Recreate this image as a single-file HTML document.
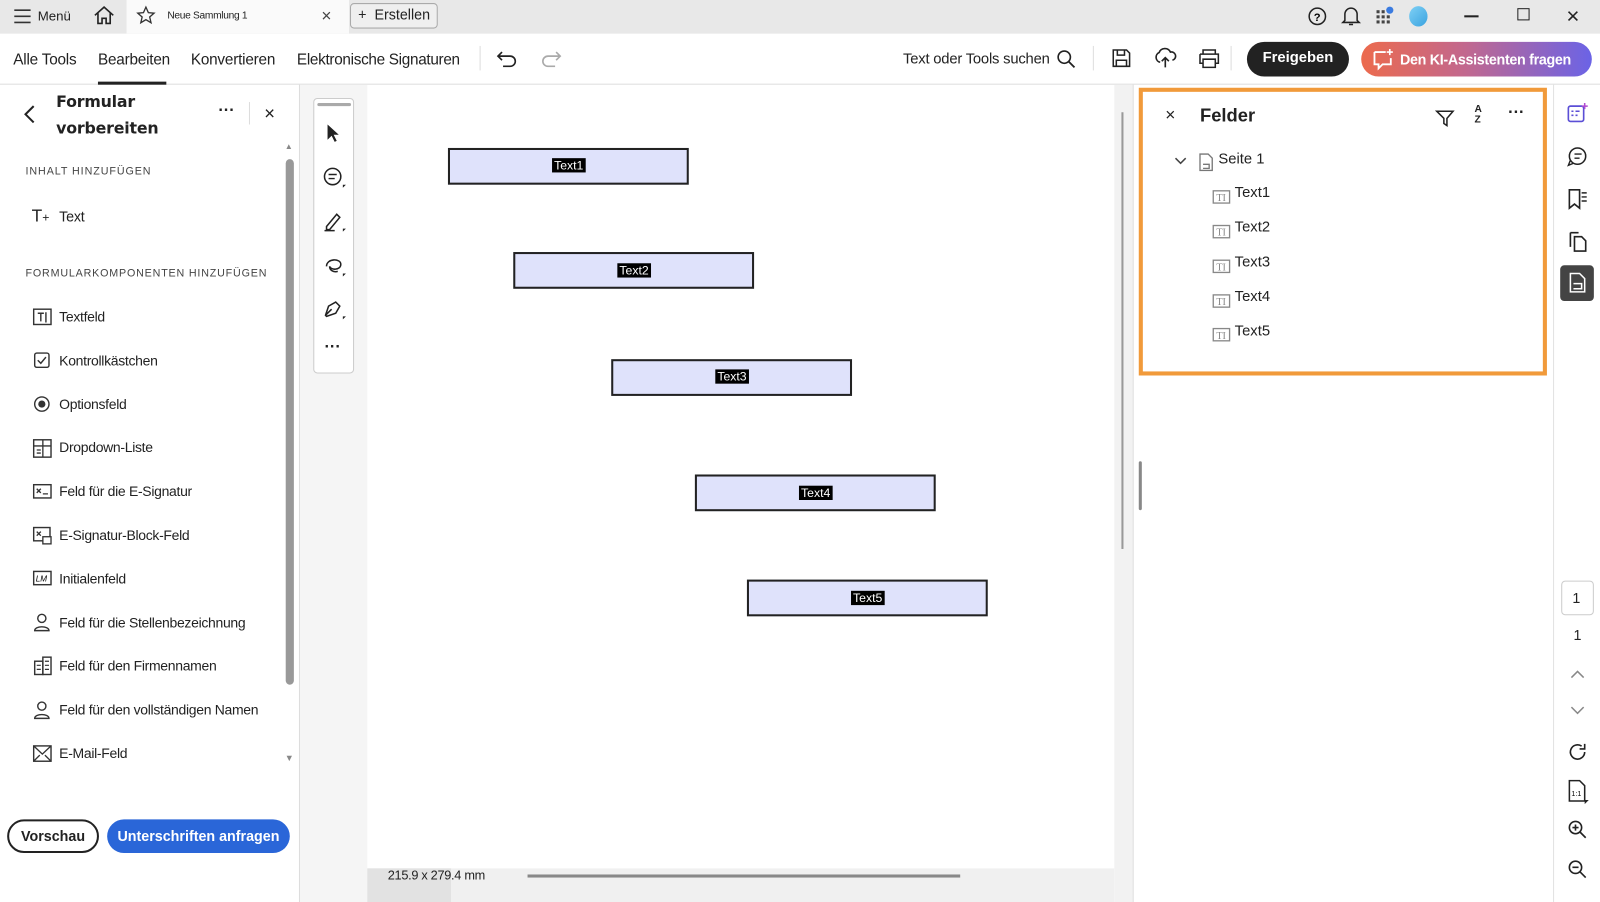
<!DOCTYPE html>
<html><head><meta charset="utf-8"><style>
*{box-sizing:border-box;margin:0;padding:0}
body{width:1600px;height:884px;overflow:hidden;font-family:"Liberation Sans",sans-serif;background:#fff;position:relative;color:#222}
#w{position:absolute;left:0;top:0;width:1568px;height:866px;transform:scale(1.0204);transform-origin:0 0}
.a{position:absolute}
.t{white-space:nowrap}
svg{position:absolute}
</style></head><body><div id="w">
<div class="a" style="left:0;top:0;width:1568px;height:33px;background:#e8e8e8"></div>
<div class="a" style="left:124px;top:0;width:218px;height:33px;background:#fafafa"></div>
<svg style="left:13px;top:8px" width="18" height="16"><path d="M1 2h16M1 8h16M1 14h16" stroke="#333" stroke-width="1.6"/></svg>
<div class="a t" style="left:37px;top:8px;font-size:13px">Menü</div>
<svg style="left:91px;top:5px" width="22" height="20"><path d="M2 10L11 2l9 8M5 8v10h4v-5h4v5h4V8" fill="none" stroke="#222" stroke-width="1.6"/></svg>
<svg style="left:133px;top:5px" width="20" height="20"><path d="M10 2l2.4 5.4 5.6.5-4.3 3.8 1.3 5.6L10 14.3 5 17.3l1.3-5.6L2 7.9l5.6-.5z" fill="none" stroke="#333" stroke-width="1.3"/></svg>
<div class="a t" style="left:164px;top:10px;font-size:10px;letter-spacing:-.3px">Neue Sammlung 1</div>
<div class="a t" style="left:315px;top:6px;font-size:17px;color:#444">×</div>
<div class="a" style="left:343px;top:3px;width:86px;height:25px;border:1px solid #aaa;border-radius:4px;background:#efefef"></div>
<div class="a t" style="left:351px;top:6px;font-size:14px">+&nbsp;&nbsp;Erstellen</div>
<svg style="left:1281px;top:6px" width="20" height="20"><circle cx="10" cy="10" r="8" fill="none" stroke="#222" stroke-width="1.5"/><text x="6.5" y="14.5" font-size="11" font-family="Liberation Sans" font-weight="bold">?</text></svg>
<svg style="left:1314px;top:5px" width="20" height="22"><path d="M4 15V9a6 6 0 0112 0v6l2 2H2zM8 19h4" fill="none" stroke="#222" stroke-width="1.5"/></svg>
<svg style="left:1348px;top:6px" width="20" height="20"><g fill="#444"><rect x="1" y="4" width="3" height="3"/><rect x="6" y="4" width="3" height="3"/><rect x="1" y="9" width="3" height="3"/><rect x="6" y="9" width="3" height="3"/><rect x="11" y="9" width="3" height="3"/><rect x="1" y="14" width="3" height="3"/><rect x="6" y="14" width="3" height="3"/><rect x="11" y="14" width="3" height="3"/></g><circle cx="14" cy="4" r="3.5" fill="#3a7be0"/></svg>
<div class="a" style="left:1381px;top:6px;width:18px;height:20px;border-radius:50%;background:linear-gradient(135deg,#7fd0f5,#3aa3e0)"></div>
<div class="a" style="left:1435px;top:15px;width:14px;height:1.5px;background:#222"></div>
<div class="a" style="left:1487px;top:8px;width:12px;height:12px;border:1.4px solid #222"></div>
<div class="a t" style="left:1535px;top:3px;font-size:22px;font-weight:300">×</div>
<div class="a" style="left:0;top:82px;width:1568px;height:1px;background:#ddd"></div>
<div class="a t" style="left:13px;top:50px;font-size:15px;letter-spacing:-.2px">Alle Tools</div>
<div class="a t" style="left:96px;top:50px;font-size:15px;letter-spacing:-.2px">Bearbeiten</div>
<div class="a" style="left:96px;top:80px;width:67px;height:3px;background:#222"></div>
<div class="a t" style="left:187px;top:50px;font-size:15px;letter-spacing:-.2px">Konvertieren</div>
<div class="a t" style="left:291px;top:50px;font-size:15px;letter-spacing:-.3px">Elektronische Signaturen</div>
<div class="a" style="left:470px;top:45px;width:1px;height:24px;background:#ddd"></div>
<svg style="left:485px;top:48px" width="24" height="18"><path d="M7 3L3 7l4 4M3 7h12a5 5 0 010 10H8" fill="none" stroke="#222" stroke-width="1.6"/></svg>
<svg style="left:528px;top:48px" width="24" height="18"><path d="M17 3l4 4-4 4M21 7H9a5 5 0 000 10h7" fill="none" stroke="#aaa" stroke-width="1.6"/></svg>
<div class="a t" style="left:885px;top:50px;font-size:14.5px;letter-spacing:-.2px">Text oder Tools suchen</div>
<svg style="left:1035px;top:48px" width="20" height="20"><circle cx="8" cy="8" r="6" fill="none" stroke="#222" stroke-width="1.6"/><path d="M12.5 12.5L18 18" stroke="#222" stroke-width="1.8"/></svg>
<div class="a" style="left:1071px;top:45px;width:1px;height:24px;background:#ddd"></div>
<svg style="left:1089px;top:47px" width="20" height="20"><path d="M2 2h13l3 3v13H2z M6 2v5h7V2 M5 18v-6h10v6" fill="none" stroke="#222" stroke-width="1.5"/></svg>
<svg style="left:1131px;top:46px" width="22" height="22"><path d="M6 15a5 5 0 01-1-9.5A6 6 0 0116 5a4 4 0 012 8M11 20v-9M7.5 14l3.5-3.5 3.5 3.5" fill="none" stroke="#222" stroke-width="1.6"/></svg>
<svg style="left:1174px;top:47px" width="22" height="20"><path d="M5 6V2h12v4M2 6h18v9h-3M5 15H2V6M5 11h12v8H5z" fill="none" stroke="#222" stroke-width="1.5"/></svg>
<div class="a" style="left:1206px;top:45px;width:1px;height:24px;background:#ddd"></div>
<div class="a" style="left:1222px;top:41px;width:100px;height:34px;border-radius:17px;background:#222"></div>
<div class="a t" style="left:1222px;top:49px;width:100px;text-align:center;font-size:14.5px;font-weight:bold;color:#fff">Freigeben</div>
<div class="a" style="left:1334px;top:41px;width:226px;height:34px;border-radius:17px;background:linear-gradient(90deg,#ec6a4d,#c2688e 45%,#6b63e6)"></div>
<svg style="left:1344px;top:47px" width="24" height="22"><path d="M3 4h11M3 4v12h4v4l4-4h8v-6" fill="none" stroke="#fff" stroke-width="1.8"/><path d="M18 1v6M15 4h6" stroke="#fff" stroke-width="1.6"/></svg>
<div class="a t" style="left:1372px;top:50px;font-size:14px;font-weight:bold;color:#fff;letter-spacing:-.3px">Den KI-Assistenten fragen</div>
<div class="a" style="left:293px;top:83px;width:1px;height:801px;background:#ddd"></div>
<svg style="left:22px;top:102px" width="14" height="20"><path d="M11 2L3 10l8 8" fill="none" stroke="#222" stroke-width="2"/></svg>
<div class="a" style="left:55px;top:87px;font-size:15.5px;line-height:26px;color:#222;font-family:'DejaVu Sans',sans-serif;font-weight:bold;letter-spacing:-.2px">Formular<br>vorbereiten</div>
<div class="a t" style="left:214px;top:100px;font-size:16px;font-weight:bold">···</div>
<div class="a" style="left:244px;top:100px;width:1px;height:22px;background:#ddd"></div>
<div class="a t" style="left:259px;top:101px;font-size:18px">×</div>
<div class="a t" style="left:25px;top:162px;font-size:10.5px;letter-spacing:.9px;color:#444">INHALT HINZUFÜGEN</div>
<div class="a t" style="left:31px;top:202px;font-size:17px">T<span style="font-size:12px">+</span></div>
<div class="a t" style="left:58px;top:204px;font-size:14px;letter-spacing:-.2px">Text</div>
<div class="a t" style="left:25px;top:262px;font-size:10.5px;letter-spacing:.8px;color:#444">FORMULARKOMPONENTEN HINZUFÜGEN</div>
<svg style="left:32px;top:302px" width="20" height="18"><rect x="1" y="1" width="17" height="15" fill="none" stroke="#333" stroke-width="1.4"/><path d="M5 5h6M8 5v8M13 4v10" stroke="#333" stroke-width="1.4"/></svg>
<svg style="left:33px;top:345px" width="18" height="18"><rect x="1" y="1" width="14" height="14" rx="2" fill="none" stroke="#333" stroke-width="1.4"/><path d="M4 8l3 3 5-6" fill="none" stroke="#333" stroke-width="1.4"/></svg>
<svg style="left:33px;top:388px" width="18" height="18"><circle cx="8" cy="8" r="7" fill="none" stroke="#333" stroke-width="1.4"/><circle cx="8" cy="8" r="3.5" fill="#333"/></svg>
<svg style="left:32px;top:430px" width="20" height="20"><rect x="1" y="1" width="17" height="17" fill="none" stroke="#333" stroke-width="1.4"/><path d="M1 7h17M10 1v17M4 11h4M4 14h4" stroke="#333" stroke-width="1.3"/></svg>
<svg style="left:32px;top:474px" width="20" height="16"><rect x="1" y="1" width="17" height="13" fill="none" stroke="#333" stroke-width="1.4"/><path d="M4 5l4 4M8 5l-4 4M10 10h5" stroke="#333" stroke-width="1.3"/></svg>
<svg style="left:32px;top:516px" width="20" height="20"><rect x="1" y="1" width="16" height="13" fill="none" stroke="#333" stroke-width="1.4"/><path d="M4 5l4 4M8 5l-4 4" stroke="#333" stroke-width="1.3"/><rect x="10" y="10" width="8" height="7" fill="#fff" stroke="#333" stroke-width="1.3"/></svg>
<svg style="left:32px;top:559px" width="20" height="16"><rect x="1" y="1" width="17" height="13" fill="none" stroke="#333" stroke-width="1.4"/><text x="3" y="11" font-size="8" font-family="Liberation Sans" font-style="italic">LM</text></svg>
<svg style="left:32px;top:600px" width="20" height="20"><circle cx="9" cy="6" r="4" fill="none" stroke="#333" stroke-width="1.4"/><path d="M2 18c0-5 14-5 14 0z" fill="none" stroke="#333" stroke-width="1.4"/></svg>
<svg style="left:32px;top:643px" width="20" height="20"><rect x="2" y="5" width="8" height="13" fill="none" stroke="#333" stroke-width="1.4"/><rect x="10" y="1" width="8" height="17" fill="none" stroke="#333" stroke-width="1.4"/><path d="M4 9h4M4 13h4M12 5h4M12 9h4M12 13h4" stroke="#333" stroke-width="1.2"/></svg>
<svg style="left:32px;top:686px" width="20" height="20"><circle cx="9" cy="6" r="4" fill="none" stroke="#333" stroke-width="1.4"/><path d="M2 18c0-5 14-5 14 0z" fill="none" stroke="#333" stroke-width="1.4"/></svg>
<svg style="left:32px;top:730px" width="20" height="18"><rect x="1" y="1" width="17" height="15" fill="none" stroke="#333" stroke-width="1.4"/><path d="M1 1l8.5 8 8.5-8M1 16l6-6M18 16l-6-6" fill="none" stroke="#333" stroke-width="1.3"/></svg>
<div class="a" style="left:58px;top:290px;font-size:13.7px;letter-spacing:-.3px;line-height:42.8px">Textfeld<br>Kontrollkästchen<br>Optionsfeld<br>Dropdown-Liste<br>Feld für die E-Signatur<br>E-Signatur-Block-Feld<br>Initialenfeld<br>Feld für die Stellenbezeichnung<br>Feld für den Firmennamen<br>Feld für den vollständigen Namen<br>E-Mail-Feld</div>
<div class="a" style="left:280px;top:156px;width:8px;height:515px;border-radius:4px;background:#999"></div>
<div class="a t" style="left:279px;top:139px;font-size:8px;color:#888">▲</div>
<div class="a t" style="left:279px;top:738px;font-size:9px;color:#888">▼</div>
<div class="a" style="left:7px;top:803px;width:90px;height:33px;border:2px solid #222;border-radius:17px"></div>
<div class="a t" style="left:7px;top:811px;width:90px;text-align:center;font-size:14px;font-weight:bold">Vorschau</div>
<div class="a" style="left:105px;top:803px;width:179px;height:33px;border-radius:17px;background:#2a66d8"></div>
<div class="a t" style="left:105px;top:811px;width:179px;text-align:center;font-size:14px;font-weight:bold;color:#fff">Unterschriften anfragen</div>
<div class="a" style="left:294px;top:83px;width:66px;height:801px;background:#f5f5f5"></div>
<div class="a" style="left:1092px;top:83px;width:18px;height:801px;background:#f2f2f2"></div>
<div class="a" style="left:1099px;top:110px;width:2px;height:428px;background:#999"></div>
<div class="a" style="left:360px;top:851px;width:732px;height:33px;background:#f0f0f0"></div>
<div class="a" style="left:360px;top:851px;width:82px;height:33px;background:#e2e2e2"></div>
<div class="a t" style="left:380px;top:851px;font-size:12.5px;letter-spacing:-.3px">215.9 x 279.4 mm</div>
<div class="a" style="left:517px;top:857px;width:424px;height:3px;background:#888"></div>
<div class="a" style="left:307px;top:96px;width:40px;height:270px;border:1px solid #ccc;border-radius:4px;background:#fff"></div>
<div class="a" style="left:311px;top:101px;width:33px;height:3px;border-radius:2px;background:#aaa"></div>
<svg style="left:318px;top:120px" width="16" height="20"><path d="M3 2v15l4-4 3 6 2-1-3-6h5z" fill="#222"/></svg>
<svg style="left:316px;top:163px" width="24" height="24"><circle cx="10" cy="10" r="8" fill="none" stroke="#222" stroke-width="1.5"/><path d="M6 8h8M6 12h6" stroke="#222" stroke-width="1.4"/><path d="M20 18l3 0-3 3z" fill="#222"/></svg>
<svg style="left:316px;top:205px" width="24" height="24"><path d="M4 17l10-12 3 3-10 12H4z" fill="none" stroke="#222" stroke-width="1.5"/><path d="M2 21h10" stroke="#222" stroke-width="1.5"/><path d="M20 19l3 0-3 3z" fill="#222"/></svg>
<svg style="left:316px;top:249px" width="24" height="24"><path d="M4 12c0-8 14-8 14-2s-10 6-11 2c0 4 4 6 8 5" fill="none" stroke="#222" stroke-width="1.5"/><path d="M20 19l3 0-3 3z" fill="#222"/></svg>
<svg style="left:316px;top:291px" width="24" height="24"><path d="M3 18l3-9 7-4 4 4-4 7-9 3zM3 18l6-6" fill="none" stroke="#222" stroke-width="1.5"/><path d="M20 19l3 0-3 3z" fill="#222"/></svg>
<div class="a t" style="left:318px;top:332px;font-size:16px;font-weight:bold">···</div>
<div class="a" style="left:439px;top:145px;width:236px;height:36px;border:2px solid #222;background:#dfe2fb"></div>
<div class="a t" style="left:541px;top:155px;font-size:12px;background:#000;color:#fff;padding:0 2px">Text1</div>
<div class="a" style="left:503px;top:247px;width:236px;height:36px;border:2px solid #222;background:#dfe2fb"></div>
<div class="a t" style="left:605px;top:258px;font-size:12px;background:#000;color:#fff;padding:0 2px">Text2</div>
<div class="a" style="left:599px;top:352px;width:236px;height:36px;border:2px solid #222;background:#dfe2fb"></div>
<div class="a t" style="left:701px;top:362px;font-size:12px;background:#000;color:#fff;padding:0 2px">Text3</div>
<div class="a" style="left:681px;top:465px;width:236px;height:36px;border:2px solid #222;background:#dfe2fb"></div>
<div class="a t" style="left:783px;top:476px;font-size:12px;background:#000;color:#fff;padding:0 2px">Text4</div>
<div class="a" style="left:732px;top:568px;width:236px;height:36px;border:2px solid #222;background:#dfe2fb"></div>
<div class="a t" style="left:834px;top:579px;font-size:12px;background:#000;color:#fff;padding:0 2px">Text5</div>
<div class="a" style="left:1110px;top:83px;width:1px;height:801px;background:#ddd"></div>
<div class="a" style="left:1116px;top:86px;width:400px;height:282px;border:4px solid #f19a3a"></div>
<div class="a" style="left:1116px;top:452px;width:3px;height:48px;border-radius:2px;background:#888"></div>
<div class="a t" style="left:1142px;top:103px;font-size:17px">×</div>
<div class="a t" style="left:1176px;top:103px;font-size:18px;font-weight:bold">Felder</div>
<svg style="left:1406px;top:106px" width="20" height="20"><path d="M2 3h16l-6 7v7l-3-2v-5z" fill="none" stroke="#222" stroke-width="1.5"/></svg>
<div class="a" style="left:1445px;top:103px;font-size:10px;line-height:10px;font-weight:bold">A<br>Z</div>
<div class="a t" style="left:1478px;top:102px;font-size:16px;font-weight:bold">···</div>
<svg style="left:1150px;top:152px" width="14" height="12"><path d="M2 3l5 5 5-5" fill="none" stroke="#444" stroke-width="1.5"/></svg>
<svg style="left:1174px;top:150px" width="16" height="18"><path d="M2 1h8l4 4v12H2zM5 11h6v4H5" fill="none" stroke="#777" stroke-width="1.3"/></svg>
<div class="a t" style="left:1194px;top:148px;font-size:14.5px">Seite 1</div>
<div class="a" style="left:1210px;top:173px;font-size:14.5px;line-height:33.9px">Text1<br>Text2<br>Text3<br>Text4<br>Text5</div>
<svg style="left:1188px;top:184px" width="20" height="170"><g fill="none" stroke="#888" stroke-width="1.3"><rect x="1" y="3" width="16" height="12"/><rect x="1" y="37" width="16" height="12"/><rect x="1" y="71" width="16" height="12"/><rect x="1" y="105" width="16" height="12"/><rect x="1" y="138" width="16" height="12"/></g><g font-size="10" font-family="Liberation Serif" fill="#888"><text x="4" y="13">TI</text><text x="4" y="47">TI</text><text x="4" y="81">TI</text><text x="4" y="115">TI</text><text x="4" y="148">TI</text></g></svg>
<div class="a" style="left:1522px;top:83px;width:1px;height:801px;background:#e2e2e2"></div>
<svg style="left:1535px;top:100px" width="22" height="22"><rect x="2" y="4" width="15" height="15" rx="2" fill="none" stroke="#5b4fd6" stroke-width="1.6"/><path d="M5 9h2M9 9h4M5 13h2M9 13h2" stroke="#5b4fd6" stroke-width="1.5"/><path d="M18 1v6M15 4h6" stroke="#b04bd0" stroke-width="1.5"/></svg>
<svg style="left:1535px;top:143px" width="22" height="22"><circle cx="11" cy="10" r="8" fill="none" stroke="#222" stroke-width="1.5"/><path d="M8 8h7M8 12h5" stroke="#222" stroke-width="1.4"/><path d="M4 14l-2 5 5-2" fill="none" stroke="#222" stroke-width="1.4"/></svg>
<svg style="left:1535px;top:184px" width="22" height="22"><path d="M3 2h10v18l-5-4-5 4z" fill="none" stroke="#222" stroke-width="1.6"/><path d="M15 5h5M15 9h5M15 13h5" stroke="#222" stroke-width="1.4"/></svg>
<svg style="left:1535px;top:225px" width="22" height="22"><path d="M4 3h8M4 3v14M8 7h7l4 4v10H8z" fill="none" stroke="#222" stroke-width="1.6"/></svg>
<div class="a" style="left:1529px;top:260px;width:33px;height:35px;border-radius:4px;background:#444"></div>
<svg style="left:1537px;top:267px" width="18" height="20"><path d="M2 1h9l5 5v13H2zM5 11h8v5H5" fill="none" stroke="#fff" stroke-width="1.5"/></svg>
<div class="a" style="left:1530px;top:569px;width:32px;height:34px;border:1px solid #ccc;border-radius:4px"></div>
<div class="a t" style="left:1541px;top:578px;font-size:14px">1</div>
<div class="a t" style="left:1542px;top:614px;font-size:14px">1</div>
<svg style="left:1538px;top:655px" width="16" height="12"><path d="M2 9l6-6 6 6" fill="none" stroke="#888" stroke-width="1.5"/></svg>
<svg style="left:1538px;top:690px" width="16" height="12"><path d="M2 3l6 6 6-6" fill="none" stroke="#888" stroke-width="1.5"/></svg>
<svg style="left:1536px;top:727px" width="20" height="20"><path d="M17 10a7 7 0 11-3-5.8M17 2v5h-5" fill="none" stroke="#222" stroke-width="1.6"/></svg>
<svg style="left:1536px;top:764px" width="22" height="24"><path d="M2 1h10l5 5v15H2z" fill="none" stroke="#222" stroke-width="1.5"/><text x="4" y="16" font-size="7" font-family="Liberation Sans">1:1</text><path d="M17 20l4 0-4 4z" fill="#222"/></svg>
<svg style="left:1536px;top:803px" width="20" height="20"><circle cx="8" cy="8" r="6" fill="none" stroke="#222" stroke-width="1.6"/><path d="M12.5 12.5L18 18M5 8h6M8 5v6" stroke="#222" stroke-width="1.6"/></svg>
<svg style="left:1536px;top:842px" width="20" height="20"><circle cx="8" cy="8" r="6" fill="none" stroke="#222" stroke-width="1.6"/><path d="M12.5 12.5L18 18M5 8h6" stroke="#222" stroke-width="1.6"/></svg>
</div></body></html>
